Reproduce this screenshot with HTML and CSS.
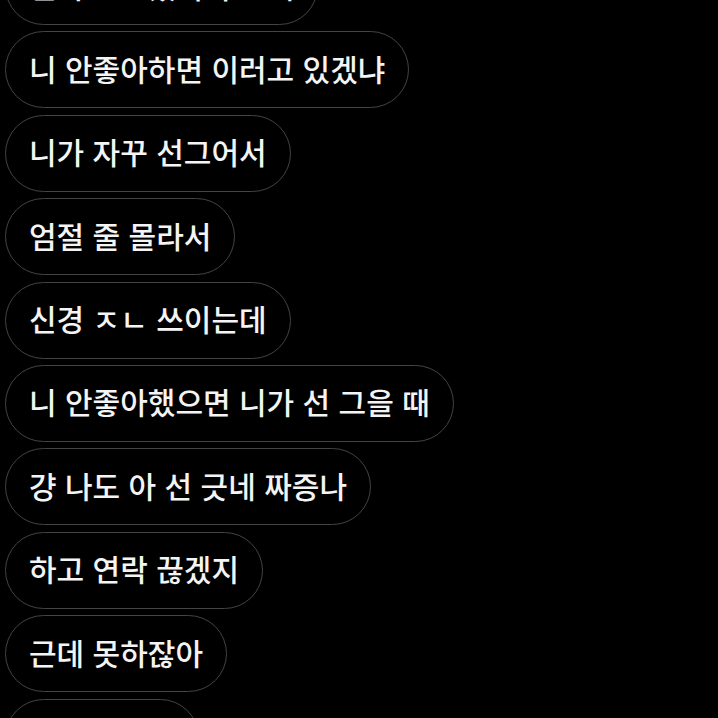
FILE: index.html
```html
<!DOCTYPE html>
<html lang="ko">
<head>
  <meta charset="UTF-8">
  <title>채팅</title>
  <meta name="viewport" content="width=device-width, initial-scale=1.0">
  <link rel="stylesheet" href="styles.css">
</head>
<body>

<div class="thread">
  <div class="bubble">진짜 모르겠어서 그래</div>
  <div class="bubble">니 안좋아하면 이러고 있겠냐</div>
  <div class="bubble">니가 자꾸 선그어서</div>
  <div class="bubble">엄절 줄 몰라서</div>
  <div class="bubble">신경 ㅈㄴ 쓰이는데</div>
  <div class="bubble">니 안좋아했으면 니가 선 그을 때</div>
  <div class="bubble">걍 나도 아 선 긋네 짜증나</div>
  <div class="bubble">하고 연락 끊겠지</div>
  <div class="bubble">근데 못하잖아</div>
  <div class="bubble">진짜 답답해</div>
</div>

</body>
</html>
```

FILE: styles.css
```css
body {
  margin: 0;
  background-color: #000;
  font-family: "Noto Sans CJK KR", "Noto Sans", sans-serif;
  overflow: hidden;
}

.thread {
  display: flex;
  flex-direction: column;
  align-items: flex-start;
  gap: 6.4px;
  margin-top: -52px;
  padding-left: 5px;
}

.bubble {
  box-sizing: border-box;
  height: 77px;
  display: flex;
  align-items: center;
  padding: 0 23px 4px 23px;
  border: 1.5px solid #444;
  border-radius: 40px;
  color: #f4f4f4;
  font-size: 30px;
  font-weight: 500;
  white-space: nowrap;
}
```
